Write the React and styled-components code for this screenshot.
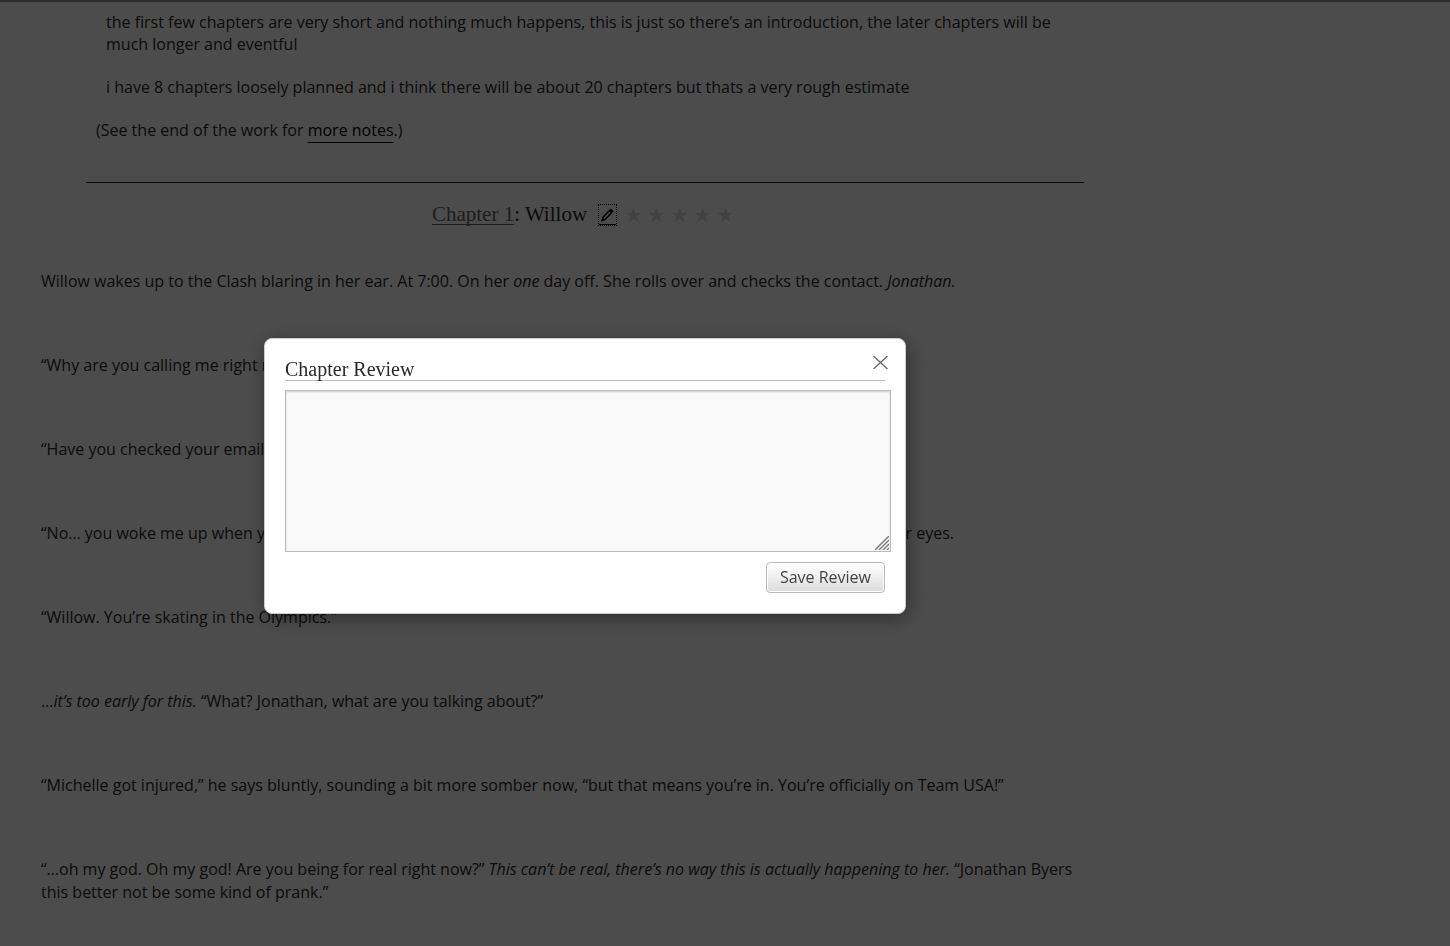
import { useState } from "react";
import styled, { createGlobalStyle } from "styled-components";

const sans = `"Open Sans", "Noto Sans", sans-serif`;
const serif = `"Liberation Serif", Georgia, serif`;

const App = () => {
  const [review, setReview] = useState("");

  return (
    <>
      <GlobalStyle />
      <Page>
        <Work>
          <Notes>
            <NoteText>
              <p>
                the first few chapters are very short and nothing much happens,
                this is just so there’s an introduction, the later chapters will
                be much longer and eventful
              </p>
              <p>
                i have 8 chapters loosely planned and i think there will be about
                20 chapters but thats a very rough estimate
              </p>
            </NoteText>
            <p>
              (See the end of the work for <NotesLink href="#notes">more notes</NotesLink>.)
            </p>
          </Notes>

          <ChapterHeader>
            <ChapterTitle>
              <ChapterLink href="#chapter-1">Chapter 1</ChapterLink>: Willow
            </ChapterTitle>
            <EditButton type="button" aria-label="Review chapter">
              <PencilIcon />
            </EditButton>
            <Stars>
              {[1, 2, 3, 4, 5].map((n) => (
                <StarButton type="button" key={n} aria-label={`Rate ${n}`}>
                  <StarIcon />
                </StarButton>
              ))}
            </Stars>
          </ChapterHeader>

          <Chapter>
            <p>
              Willow wakes up to the Clash blaring in her ear. At 7:00. On her{" "}
              <em>one</em> day off. She rolls over and checks the contact.{" "}
              <em>Jonathan.</em>
            </p>
            <p>“Why are you calling me right now?”</p>
            <p>“Have you checked your email</p>
            <SplitLine>
              <span>“No… you woke me up when y</span>
              <span>r eyes.</span>
            </SplitLine>
            <p>“Willow. You’re skating in the Olympics.”</p>
            <p>
              …<em>it’s too early for this.</em> “What? Jonathan, what are you
              talking about?”
            </p>
            <p>
              “Michelle got injured,” he says bluntly, sounding a bit more somber
              now, “but that means you’re in. You’re officially on Team USA!”
            </p>
            <p>
              “…oh my god. Oh my god! Are you being for real right now?”{" "}
              <em>
                This can’t be real, there’s no way this is actually happening to
                her.
              </em>{" "}
              “Jonathan Byers this better not be some kind of prank.”
            </p>
          </Chapter>
        </Work>
      </Page>

      <Overlay>
        <Modal role="dialog" aria-labelledby="review-title">
          <CloseButton type="button" aria-label="Close">
            <CloseIcon />
          </CloseButton>
          <ModalTitle id="review-title">Chapter Review</ModalTitle>
          <ReviewField>
            <ReviewText
              aria-labelledby="review-title"
              value={review}
              onChange={(e) => setReview(e.target.value)}
            />
            <Grip />
          </ReviewField>
          <Actions>
            <SaveButton type="button">Save Review</SaveButton>
          </Actions>
        </Modal>
      </Overlay>
    </>
  );
};

export default App;

const PencilIcon = () => (
  <svg width="15" height="16" viewBox="0 0 15 16" aria-hidden="true">
    <path
      d="M2.4 13.4 3 10.2 9.4 3.6l2.2 2.2-6.2 6.4Z"
      fill="none"
      stroke="#000"
      strokeWidth="1.5"
    />
    <path d="m8.6 3.4 2.2-2 3 3-2.2 2.2Z" fill="#000" />
    <path d="m1.2 14.6.9-3.8 2.8 2.8Z" fill="#000" />
  </svg>
);

const StarIcon = () => (
  <svg width="17" height="18" viewBox="0 0 17 18" aria-hidden="true">
    <path
      d="m8.5 1 2 5.8h6l-4.9 3.6 1.9 6-5-3.6-5 3.6 1.9-6L.5 6.8h6Z"
      fill="currentColor"
    />
  </svg>
);

const CloseIcon = () => (
  <svg width="15" height="13" viewBox="0 0 15 13" aria-hidden="true">
    <path d="m.5 0 14 13M14.5 0l-14 13" stroke="#666" strokeWidth="1.3" />
  </svg>
);

const GlobalStyle = createGlobalStyle`
  body {
    margin: 0;
    background: #fff;
    color: #2a2a2a;
    font-family: ${sans};
    font-size: 16px;
    line-height: 22px;
    overflow: hidden;
  }
  p {
    margin: 0;
  }
  button {
    font-family: inherit;
    cursor: pointer;
  }
`;

// the right column stays empty next to the work
const Page = styled.main`
  border-top: 2px solid #9a99aa;
  padding-right: 280px;
`;

const Work = styled.article`
  padding: 9px 41px 0;
`;

const Notes = styled.section`
  margin: 0 45px;
  padding: 0 10px 41px;
  border-bottom: 1px solid #2a2a2a;
`;

const NoteText = styled.blockquote`
  margin: 0;
  padding: 0 10px;
  p {
    margin-bottom: 21px;
  }
`;

const NotesLink = styled.a`
  color: #000;
  text-decoration: underline 1px;
  text-decoration-skip-ink: none;
  text-underline-offset: 6px;
`;

const ChapterHeader = styled.header`
  display: flex;
  justify-content: center;
  align-items: center;
  height: 24px;
  margin: 20px 0 43px;
`;

const ChapterTitle = styled.h3`
  margin: 0;
  padding-bottom: 2px;
  font-family: ${serif};
  font-size: 21px;
  line-height: 22px;
  font-weight: 400;
`;

const ChapterLink = styled.a`
  color: #666;
  text-decoration: underline 1px;
  text-decoration-skip-ink: none;
  text-underline-offset: 3px;
`;

const EditButton = styled.button`
  display: flex;
  margin: 0 9px 0 12px;
  padding: 2px 1px 1px;
  border: 0;
  border-bottom: 1px solid #000;
  outline: 1px dotted #000;
  background: none;
`;

const Stars = styled.div`
  display: flex;
  gap: 6px;
  margin-right: 4px;
`;

const StarButton = styled.button`
  display: flex;
  padding: 0;
  border: 0;
  background: none;
  color: #ddd;
`;

const Chapter = styled.section`
  padding-right: 28px;
  line-height: 23px;
  p {
    margin-bottom: 61px;
  }
`;

const SplitLine = styled.p`
  display: flex;
  justify-content: space-between;
  padding-right: 147px;
`;

const Overlay = styled.div`
  position: fixed;
  inset: 0;
  display: flex;
  justify-content: center;
  align-items: center;
  padding: 6px 280px 0 0;
  background: rgba(0, 0, 0, 0.7);
`;

const Modal = styled.section`
  position: relative;
  box-sizing: border-box;
  width: 642px;
  max-width: 100%;
  padding: 20px;
  border: 1px solid #ccc;
  border-radius: 8px;
  background: #fff;
  box-shadow: 2px 4px 20px rgba(0, 0, 0, 0.4);
`;

const CloseButton = styled.button`
  position: absolute;
  top: 17px;
  right: 17px;
  display: flex;
  padding: 0;
  border: 0;
  background: none;
`;

const ModalTitle = styled.h4`
  margin: 0 0 9px;
  border-bottom: 1px solid #bbb;
  font-family: ${serif};
  font-size: 20px;
  line-height: 21px;
  font-weight: 400;
`;

const ReviewField = styled.div`
  position: relative;
  margin-right: -6px;
`;

const ReviewText = styled.textarea`
  display: block;
  box-sizing: border-box;
  width: 100%;
  height: 162px;
  padding: 3px;
  border: 1px solid #bbb;
  background: #f9f9f9;
  box-shadow: inset 0 1px 2px #ccc;
  font-family: ${sans};
  font-size: 16px;
  resize: none;
  outline: 0;
`;

const GripSvg = styled.svg`
  position: absolute;
  right: 2px;
  bottom: 2px;
  pointer-events: none;
`;

const Grip = () => (
  <GripSvg width="14" height="14" viewBox="0 0 14 14" aria-hidden="true">
    <path
      d="M0 14 14 0M4 14 14 4M8 14l6-6M12 14l2-2"
      stroke="#777"
      strokeWidth="1.4"
    />
  </GripSvg>
);

const Actions = styled.div`
  display: flex;
  justify-content: flex-end;
  margin-top: 10px;
`;

const SaveButton = styled.button`
  height: 31px;
  padding: 0 13px 2px;
  border: 1px solid #bbb;
  border-radius: 4px;
  background: linear-gradient(#fff 2%, #ddd 95%);
  box-shadow: inset 0 0 0 1px #fff;
  color: #444;
  font-size: 16px;
`;
